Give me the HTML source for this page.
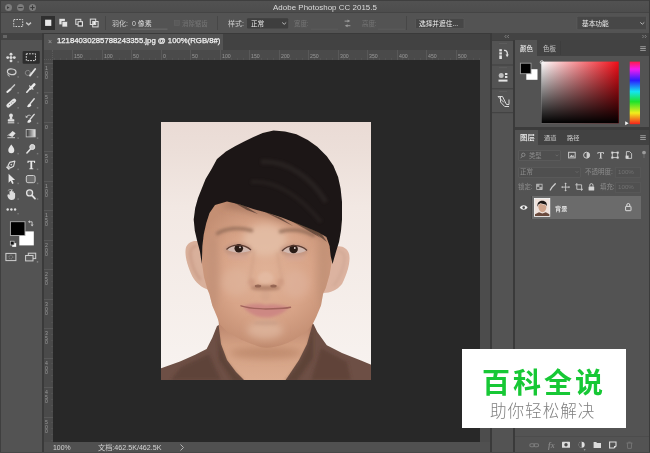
<!DOCTYPE html>
<html lang="zh">
<head>
<meta charset="utf-8">
<title>Adobe Photoshop CC 2015.5</title>
<style>
*{box-sizing:border-box;margin:0;padding:0}
html,body{width:650px;height:453px;overflow:hidden;background:#535353}
body{position:relative;font-family:"Liberation Sans","Noto Sans CJK SC",sans-serif;color:#d6d6d6;font-size:7px;line-height:1}
.a{position:absolute}
.t{position:absolute;white-space:nowrap;line-height:10px;height:10px;will-change:transform}
#titlebar{left:0;top:0;width:650px;height:13px;background:linear-gradient(#525252,#4d4d4d);border-bottom:1px solid #444}
#title{left:0;width:650px;top:3px;text-align:center;font-size:7.9px;color:#dcdcdc;letter-spacing:.05px}
.tl{position:absolute;top:4px;width:7px;height:7px;border-radius:50%;background:#7d7d7d}
#optbar{left:0;top:13px;width:650px;height:20px;background:#535353}
#toolhead{left:0;top:33px;width:42px;height:7px;background:#434343}
#toolbar{left:0;top:40px;width:42px;height:413px;background:#535353}
#toolborder{left:42px;top:33px;width:2px;height:420px;background:#3a3a3a}
#tabbar{left:44px;top:33px;width:446px;height:17px;background:#424242;border-top:1px solid #3a3a3a}
#tab{left:44px;top:34px;width:179px;height:16px;background:#535353}
#hruler{left:44px;top:50px;width:446px;height:10px;background:#4a4a4a}
#vruler{left:44px;top:60px;width:9px;height:382px;background:#4a4a4a}
#canvas{left:53px;top:60px;width:427px;height:382px;background:#282828}
#vscroll{left:480px;top:60px;width:10px;height:382px;background:#4c4c4c}
#status{left:44px;top:442px;width:446px;height:11px;background:#505050}
#stripborder{left:490px;top:33px;width:2px;height:420px;background:#3a3a3a}
#striphead{left:492px;top:33px;width:158px;height:7px;background:#434343}
#strip{left:492px;top:40px;width:21px;height:413px;background:#535353}
#panelborder{left:513px;top:40px;width:2px;height:413px;background:#3a3a3a}
#panel{left:515px;top:40px;width:135px;height:413px;background:#535353}
.ptabs{left:515px;width:135px;height:16px;background:#424242}
.ptab{position:absolute;top:0;height:16px;background:#535353}
.rl{will-change:transform;position:absolute;font-size:5.2px;color:#9a9a9a;line-height:5px;white-space:nowrap}
.tick{position:absolute;background:#585858}
</style>
</head>
<body>
<div id="ui" style="position:absolute;left:0;top:0;width:650px;height:453px;filter:blur(.4px)">
<!-- title bar -->
<div class="a" id="titlebar"></div>
<div class="tl" style="left:5px"></div><div class="tl" style="left:17px"></div><div class="tl" style="left:29px"></div>
<div class="t" id="title">Adobe Photoshop CC 2015.5</div>

<!-- options bar -->
<div class="a" id="optbar"></div>


<!-- options bar content -->
<svg class="a" style="left:0;top:0" width="650" height="453" viewBox="0 0 650 453" id="ico1">
 <!-- traffic light glyphs -->
 <g stroke="#3a3a3a" stroke-width="1" fill="none">
  <path d="M7 6.2l2.6 1.4-2.6 1.4z" fill="#3a3a3a" stroke="none"/>
  <path d="M18.3 7.6h4.4"/>
  <path d="M30.3 7.6h4.4M32.5 5.4v4.4"/>
 </g>
 <!-- marquee tool icon -->
 <rect x="13.7" y="19.5" width="9" height="7" fill="none" stroke="#cfcfcf" stroke-width="1" stroke-dasharray="1.6 1.1"/>
 <path d="M26.200 22.600l2.400 2.100 2.400-2.100" fill="none" stroke="#c6c6c6" stroke-width="1.400"/>
 <!-- selection mode buttons -->
 <rect x="41" y="16" width="14" height="14" fill="#2f2f2f"/>
 <rect x="45.100" y="19.700" width="6.200" height="6.200" fill="#e6e6e6"/>
 <rect x="59.3" y="18.8" width="5.6" height="5.6" fill="#e4e4e4"/>
 <rect x="62" y="21.4" width="5.6" height="5.6" fill="#e4e4e4" stroke="#535353" stroke-width=".7"/>
 <rect x="75.8" y="19.3" width="5" height="5" fill="none" stroke="#dcdcdc" stroke-width="1"/>
 <rect x="77.6" y="21.2" width="5.4" height="5.4" fill="#e4e4e4"/>
 <rect x="78.6" y="22.2" width="3.2" height="3.2" fill="#3a3a3a"/>
 <rect x="90.3" y="19.1" width="5.4" height="5.4" fill="none" stroke="#dcdcdc" stroke-width="1"/>
 <rect x="92.7" y="21.5" width="5.4" height="5.4" fill="none" stroke="#dcdcdc" stroke-width="1"/>
 <rect x="93.2" y="22" width="2" height="2" fill="#f0f0f0"/>
 <!-- separators -->
 <rect x="105" y="16" width="1" height="14" fill="#474747"/>
 <rect x="217" y="16" width="1" height="14" fill="#474747"/>
 <rect x="406" y="16" width="1" height="14" fill="#474747"/>
 <!-- feather underline -->
 <rect x="130.5" y="28.6" width="37" height="1" fill="#6c6c6c"/>
 <!-- checkbox -->
 <rect x="174.3" y="20.6" width="5" height="5" fill="#5a5a5a" stroke="#636363" stroke-width=".6"/>
 <!-- style dropdown -->
 <rect x="247" y="18.3" width="41.2" height="10.2" rx="1" fill="#3e3e3e"/>
 <path d="M282.2 22.5l2 1.8 2-1.8" fill="none" stroke="#b9b9b9" stroke-width="1"/>
 <!-- width/height fields -->
 <rect x="311" y="28.6" width="27" height="1" fill="#5b5b5b"/>
 <rect x="378" y="28.6" width="27" height="1" fill="#5b5b5b"/>
 <g fill="#9c9c9c"><path d="M347.5 19.6l2.8 1.5-2.8 1.5zM347.6 24.2l-2.8 1.5 2.8 1.5z"/><rect x="344.6" y="20.6" width="3.4" height="1"/><rect x="347" y="25.2" width="3.4" height="1"/></g>
 <!-- select and mask button -->
 <rect x="415.5" y="18.3" width="48.5" height="10.4" rx="1" fill="#464646" stroke="#5f5f5f" stroke-width=".6"/>
 <!-- workspace dropdown -->
 <rect x="577" y="16.2" width="69.5" height="13.6" rx="1" fill="#474747" stroke="#5e5e5e" stroke-width=".6"/>
 <path d="M640.3 22.4l2 1.8 2-1.8" fill="none" stroke="#b9b9b9" stroke-width="1"/>
</svg>
<div class="t" style="left:111.5px;top:18.5px;font-size:7px;color:#cfcfcf">羽化:</div>
<div class="t" style="left:131.5px;top:18.5px;font-size:7px;color:#d8d8d8">0 像素</div>
<div class="t" style="left:182px;top:18.5px;font-size:6.4px;color:#767676">消除锯齿</div>
<div class="t" style="left:227.5px;top:18.5px;font-size:7px;color:#cfcfcf">样式:</div>
<div class="t" style="left:250.5px;top:18.5px;font-size:6.6px;color:#ececec">正常</div>
<div class="t" style="left:294px;top:18.5px;font-size:6.4px;color:#767676">宽度:</div>
<div class="t" style="left:362px;top:18.5px;font-size:6.4px;color:#767676">高度:</div>
<div class="t" style="left:419px;top:18.5px;font-size:6.7px;color:#f0f0f0">选择并遮住...</div>
<div class="t" style="left:581.5px;top:18.5px;font-size:6.7px;color:#ececec">基本功能</div>

<!-- toolbar -->
<div class="a" id="toolhead"></div>
<div class="a" id="toolbar"></div>
<div class="a" id="toolborder"></div>


<svg class="a" style="left:0;top:0" width="650" height="453" viewBox="0 0 650 453" id="ico2">
 <g fill="#8a8a8a"><rect x="3.5" y="35" width="1" height="3"/><rect x="5.5" y="35" width="1" height="3"/></g>
 <g><rect x="17.4" y="61.2" width="1.5" height="1.5" fill="#7b7b7b"/><rect x="36.7" y="61.1" width="1.6" height="1.6" fill="#9a9a9a"/><rect x="17.4" y="76.2" width="1.5" height="1.5" fill="#7b7b7b"/><rect x="36.800000000000004" y="76.2" width="1.5" height="1.5" fill="#7b7b7b"/><rect x="17.4" y="92.1" width="1.5" height="1.5" fill="#7b7b7b"/><rect x="36.800000000000004" y="92.1" width="1.5" height="1.5" fill="#7b7b7b"/><rect x="17.4" y="107.1" width="1.5" height="1.5" fill="#7b7b7b"/><rect x="36.800000000000004" y="107.1" width="1.5" height="1.5" fill="#7b7b7b"/><rect x="17.4" y="122.5" width="1.5" height="1.5" fill="#7b7b7b"/><rect x="36.800000000000004" y="122.5" width="1.5" height="1.5" fill="#7b7b7b"/><rect x="17.4" y="137.4" width="1.5" height="1.5" fill="#7b7b7b"/><rect x="36.800000000000004" y="137.4" width="1.5" height="1.5" fill="#7b7b7b"/><rect x="17.4" y="152.9" width="1.5" height="1.5" fill="#7b7b7b"/><rect x="36.800000000000004" y="152.9" width="1.5" height="1.5" fill="#7b7b7b"/><rect x="17.4" y="168.6" width="1.5" height="1.5" fill="#7b7b7b"/><rect x="36.800000000000004" y="168.6" width="1.5" height="1.5" fill="#7b7b7b"/><rect x="17.4" y="182.7" width="1.5" height="1.5" fill="#7b7b7b"/><rect x="36.800000000000004" y="182.7" width="1.5" height="1.5" fill="#7b7b7b"/><rect x="17.4" y="198.3" width="1.5" height="1.5" fill="#7b7b7b"/><rect x="36.800000000000004" y="198.3" width="1.5" height="1.5" fill="#7b7b7b"/><rect x="17.4" y="213" width="1.4" height="1.4" fill="#7b7b7b"/></g>
 <!-- move -->
 <g fill="#d9d9d9">
  <circle cx="11" cy="57.6" r="1.5"/><circle cx="11" cy="54.3" r="1.45"/><circle cx="11" cy="60.9" r="1.45"/><circle cx="7.7" cy="57.6" r="1.45"/><circle cx="14.3" cy="57.6" r="1.45"/>
 </g>
 <!-- marquee (selected) -->
 <rect x="22.6" y="51" width="17.2" height="12.8" rx="1" fill="#2d2d2d"/>
 <rect x="26.3" y="53.8" width="9.2" height="6.8" fill="none" stroke="#d6d6d6" stroke-width="1" stroke-dasharray="1.7 1.1"/>
 <!-- lasso -->
 <g fill="none" stroke="#cfcfcf" stroke-width="1.2">
  <ellipse cx="11.7" cy="71.8" rx="4.3" ry="2.8" transform="rotate(8 11.7 71.8)"/>
  <path d="M8.3 73.6c-.8 1-.2 2.4 1.4 2.6" stroke-width="1"/>
 </g>
 <!-- quick select -->
 <circle cx="27.8" cy="72.9" r="2.5" fill="none" stroke="#b9b9b9" stroke-width=".8" stroke-dasharray="1.2 .8"/>
 <path d="M30 75.6l5.2-6.6" stroke="#e2e2e2" stroke-width="1.9" stroke-linecap="round"/>
 <!-- crop / slice -->
 <path d="M7.3 91.9l3.2-2.7" stroke="#ededed" stroke-width="2" stroke-linecap="round"/>
 <path d="M10.8 88.8l3.7-3.9" stroke="#c4c4c4" stroke-width="1.5" stroke-linecap="round"/>
 <!-- eyedropper -->
 <path d="M26.8 92.2l4-4.4" stroke="#e6e6e6" stroke-width="1.6" stroke-linecap="round"/>
 <path d="M30.4 88.6l3.9-4.2" stroke="#ededed" stroke-width="2.6" stroke-linecap="round"/>
 <path d="M29.6 85.9l3.4 3.3" stroke="#e0e0e0" stroke-width="1.2" stroke-linecap="round"/>
 <!-- healing (bandage) -->
 <path d="M8.4 105.6l5.8-5" stroke="#e2e2e2" stroke-width="4" stroke-linecap="round"/>
 <path d="M9.6 104.5l.01 0M11.3 103.1l.01 0M13 101.6l.01 0" stroke="#6b6b6b" stroke-width="1" stroke-linecap="round"/>
 <!-- brush -->
 <path d="M30.3 103.4l3.9-4.6" stroke="#dcdcdc" stroke-width="1.5" stroke-linecap="round"/>
 <path d="M27.2 107c.3-1.7 1.200-3 2.800-3.400.9.600 1.200 1.200 1.300 2-1.100 1.400-2.500 1.800-4.100 1.400z" fill="#ececec"/>
 <!-- stamp -->
 <g fill="#e0e0e0"><circle cx="11" cy="115.500" r="1.9"/><path d="M10 116.500h2l.5 3h-3z"/><rect x="7.8" y="119.300" width="6.500" height="2.300" rx=".5"/><rect x="7.800" y="122.300" width="6.500" height="1"/></g>
 <!-- history brush -->
 <path d="M30.300 119l3.900-4.600" stroke="#dcdcdc" stroke-width="1.400" stroke-linecap="round"/>
 <path d="M27.200 122.600c.3-1.700 1.200-3 2.800-3.400.9.600 1.200 1.200 1.300 2-1.100 1.400-2.500 1.800-4.100 1.400z" fill="#ececec"/>
 <path d="M26.300 117.200c.8-1.800 2.600-2.400 4.200-1.700" fill="none" stroke="#c9c9c9" stroke-width=".9"/>
 <path d="M25.400 115.400l.6 2.500 2.300-.9z" fill="#c9c9c9"/>
 <!-- eraser -->
 <path d="M8.300 135.300l4.300-4.300 3 2.300-3.200 3.600z" fill="#e2e2e2"/>
 <path d="M7.400 137.700h7.600" stroke="#cfcfcf" stroke-width="1"/>
 <path d="M7.600 135.800l2.200-2.200" stroke="#bdbdbd" stroke-width=".9"/>
 <!-- gradient -->
 <defs><linearGradient id="gr" x1="0" x2="1" y1="0" y2="0"><stop offset="0" stop-color="#2e2e2e"/><stop offset="1" stop-color="#e8e8e8"/></linearGradient></defs>
 <rect x="26.200" y="129.600" width="9" height="7.300" fill="url(#gr)" stroke="#c8c8c8" stroke-width=".8"/>
 <!-- blur drop -->
 <path d="M11.300 144.600c1.600 2.300 3 3.900 3 5.700a3 3 0 0 1-6 0c0-1.800 1.400-3.400 3-5.700z" fill="#e6e6e6"/>
 <!-- dodge -->
 <circle cx="32.300" cy="147" r="2.500" fill="#c9c9c9" stroke="#e6e6e6" stroke-width="1"/>
 <path d="M30.300 149.300l-3.400 3.700" stroke="#e2e2e2" stroke-width="1.600" stroke-linecap="round"/>
 <!-- pen -->
 <g transform="rotate(45 11 165)"><path d="M11 159.500l2.700 4.500-1 3.500h-3.400l-1-3.500z" fill="none" stroke="#dcdcdc" stroke-width="1.100" stroke-linejoin="round"/><rect x="9" y="168.300" width="4" height="1.800" fill="#dcdcdc"/><circle cx="11" cy="164.600" r=".8" fill="#dcdcdc"/></g>
 <!-- T -->
 <path d="M27.500 160.700h7.600v2.300h-.9l-.3-1.200h-1.700v6.400l1.100.3v.8h-4v-.8l1.100-.3v-6.400h-1.700l-.3 1.200h-.9z" fill="#e8e8e8"/>
 <!-- path selection arrow -->
 <path d="M8.600 173.700v9l2.100-2 1.500 3.300 1.500-.7-1.500-3.200h2.900z" fill="#e6e6e6"/>
 <!-- shape -->
 <rect x="26.300" y="175.500" width="8.800" height="7.200" rx="1.600" fill="#6c6c6c" stroke="#cdcdcd" stroke-width="1"/>
 <!-- hand -->
 <path d="M7.600 196.500c-.5-1.600.2-2.600 1.300-2.100l.6.900v-3.600c0-1 1.300-1 1.400 0v-1c.1-1 1.400-1 1.500 0v1.200c.1-1 1.400-.9 1.400.1v1.300c.2-.9 1.300-.8 1.300.2v3.500c0 2-1.300 3-3.500 3-2 0-3.300-1.300-4-3.500z" fill="#dcdcdc"/>
 <path d="M7.800 190.800c1.200-1.300 3.200-1.700 5-1" fill="none" stroke="#b5b5b5" stroke-width=".8"/>
 <!-- zoom -->
 <circle cx="29.600" cy="192.900" r="3" fill="#6a6a6a" stroke="#e2e2e2" stroke-width="1.300"/>
 <path d="M32 195.400l3 3.200" stroke="#e2e2e2" stroke-width="1.800" stroke-linecap="round"/>
 <!-- dots -->
 <g fill="#e0e0e0"><circle cx="7.700" cy="209.500" r="1.200"/><circle cx="11.400" cy="209.500" r="1.200"/><circle cx="15.100" cy="209.500" r="1.200"/></g>
 <!-- colour swatches -->
 <rect x="19.300" y="231.400" width="14.500" height="14" fill="#fff"/>
 <rect x="10.400" y="221.700" width="14.600" height="13.800" fill="#000" stroke="#b0b0b0" stroke-width=".9"/>
 <g fill="none" stroke="#cfcfcf" stroke-width=".9"><path d="M29.500 221.800h2.600v2.800"/></g>
 <path d="M28 221.800l1.800-1.500v3zM32.100 226.400l-1.500-1.800h3z" fill="#cfcfcf"/>
 <rect x="12.400" y="243.200" width="3.600" height="3.600" fill="#fff" stroke="#ddd" stroke-width=".4"/>
 <rect x="10.300" y="241.200" width="3.800" height="3.800" fill="#111" stroke="#cfcfcf" stroke-width=".7"/>
 <!-- quick mask & screen mode -->
 <rect x="5.900" y="253.400" width="10" height="7.200" fill="none" stroke="#cfcfcf" stroke-width="1"/>
 <circle cx="10.900" cy="257" r="1.900" fill="none" stroke="#9d9d9d" stroke-width=".8" stroke-dasharray="1 .7"/>
 <rect x="28.300" y="253.200" width="7.400" height="5.400" fill="#5c5c5c" stroke="#cfcfcf" stroke-width="1"/>
 <rect x="25.600" y="255.500" width="7.400" height="5.400" fill="#5c5c5c" stroke="#cfcfcf" stroke-width="1"/>
 <rect x="36.800" y="261.200" width="1.400" height="1.400" fill="#8a8a8a"/>
</svg>

<!-- document -->
<div class="a" id="tabbar"></div>
<div class="a" id="tab"></div>
<div class="t" style="left:48px;top:37px;font-size:7px;color:#a0a0a0">×</div>
<div class="t" style="left:57.3px;top:36.2px;font-size:7.75px;color:#f2f2f2;-webkit-text-stroke:.25px #f2f2f2">12184030285788243355.jpg @ 100%(RGB/8#)</div>
<div class="a" id="hruler"></div>
<div class="a" id="vruler"></div>
<div class="tick" style="left:72.0px;top:50px;width:1px;height:10px"></div><div class="rl" style="left:74.0px;top:54px">150</div><div class="tick" style="left:101.5px;top:50px;width:1px;height:10px"></div><div class="rl" style="left:103.5px;top:54px">100</div><div class="tick" style="left:131.0px;top:50px;width:1px;height:10px"></div><div class="rl" style="left:133.0px;top:54px">50</div><div class="tick" style="left:160.5px;top:50px;width:1px;height:10px"></div><div class="rl" style="left:162.5px;top:54px">0</div><div class="tick" style="left:190.0px;top:50px;width:1px;height:10px"></div><div class="rl" style="left:192.0px;top:54px">50</div><div class="tick" style="left:219.5px;top:50px;width:1px;height:10px"></div><div class="rl" style="left:221.5px;top:54px">100</div><div class="tick" style="left:249.0px;top:50px;width:1px;height:10px"></div><div class="rl" style="left:251.0px;top:54px">150</div><div class="tick" style="left:278.5px;top:50px;width:1px;height:10px"></div><div class="rl" style="left:280.5px;top:54px">200</div><div class="tick" style="left:308.0px;top:50px;width:1px;height:10px"></div><div class="rl" style="left:310.0px;top:54px">250</div><div class="tick" style="left:337.5px;top:50px;width:1px;height:10px"></div><div class="rl" style="left:339.5px;top:54px">300</div><div class="tick" style="left:367.0px;top:50px;width:1px;height:10px"></div><div class="rl" style="left:369.0px;top:54px">350</div><div class="tick" style="left:396.5px;top:50px;width:1px;height:10px"></div><div class="rl" style="left:398.5px;top:54px">400</div><div class="tick" style="left:426.0px;top:50px;width:1px;height:10px"></div><div class="rl" style="left:428.0px;top:54px">450</div><div class="tick" style="left:455.5px;top:50px;width:1px;height:10px"></div><div class="rl" style="left:457.5px;top:54px">500</div><div class="tick" style="left:54.3px;top:57.5px;width:1px;height:2.5px;background:#525252"></div><div class="tick" style="left:60.2px;top:57.5px;width:1px;height:2.5px;background:#525252"></div><div class="tick" style="left:66.1px;top:57.5px;width:1px;height:2.5px;background:#525252"></div><div class="tick" style="left:77.9px;top:57.5px;width:1px;height:2.5px;background:#525252"></div><div class="tick" style="left:83.8px;top:57.5px;width:1px;height:2.5px;background:#525252"></div><div class="tick" style="left:89.7px;top:57.5px;width:1px;height:2.5px;background:#525252"></div><div class="tick" style="left:95.6px;top:57.5px;width:1px;height:2.5px;background:#525252"></div><div class="tick" style="left:107.4px;top:57.5px;width:1px;height:2.5px;background:#525252"></div><div class="tick" style="left:113.3px;top:57.5px;width:1px;height:2.5px;background:#525252"></div><div class="tick" style="left:119.2px;top:57.5px;width:1px;height:2.5px;background:#525252"></div><div class="tick" style="left:125.1px;top:57.5px;width:1px;height:2.5px;background:#525252"></div><div class="tick" style="left:136.9px;top:57.5px;width:1px;height:2.5px;background:#525252"></div><div class="tick" style="left:142.8px;top:57.5px;width:1px;height:2.5px;background:#525252"></div><div class="tick" style="left:148.7px;top:57.5px;width:1px;height:2.5px;background:#525252"></div><div class="tick" style="left:154.6px;top:57.5px;width:1px;height:2.5px;background:#525252"></div><div class="tick" style="left:166.4px;top:57.5px;width:1px;height:2.5px;background:#525252"></div><div class="tick" style="left:172.3px;top:57.5px;width:1px;height:2.5px;background:#525252"></div><div class="tick" style="left:178.2px;top:57.5px;width:1px;height:2.5px;background:#525252"></div><div class="tick" style="left:184.1px;top:57.5px;width:1px;height:2.5px;background:#525252"></div><div class="tick" style="left:195.9px;top:57.5px;width:1px;height:2.5px;background:#525252"></div><div class="tick" style="left:201.8px;top:57.5px;width:1px;height:2.5px;background:#525252"></div><div class="tick" style="left:207.7px;top:57.5px;width:1px;height:2.5px;background:#525252"></div><div class="tick" style="left:213.6px;top:57.5px;width:1px;height:2.5px;background:#525252"></div><div class="tick" style="left:225.4px;top:57.5px;width:1px;height:2.5px;background:#525252"></div><div class="tick" style="left:231.3px;top:57.5px;width:1px;height:2.5px;background:#525252"></div><div class="tick" style="left:237.2px;top:57.5px;width:1px;height:2.5px;background:#525252"></div><div class="tick" style="left:243.1px;top:57.5px;width:1px;height:2.5px;background:#525252"></div><div class="tick" style="left:254.9px;top:57.5px;width:1px;height:2.5px;background:#525252"></div><div class="tick" style="left:260.8px;top:57.5px;width:1px;height:2.5px;background:#525252"></div><div class="tick" style="left:266.7px;top:57.5px;width:1px;height:2.5px;background:#525252"></div><div class="tick" style="left:272.6px;top:57.5px;width:1px;height:2.5px;background:#525252"></div><div class="tick" style="left:284.4px;top:57.5px;width:1px;height:2.5px;background:#525252"></div><div class="tick" style="left:290.3px;top:57.5px;width:1px;height:2.5px;background:#525252"></div><div class="tick" style="left:296.2px;top:57.5px;width:1px;height:2.5px;background:#525252"></div><div class="tick" style="left:302.1px;top:57.5px;width:1px;height:2.5px;background:#525252"></div><div class="tick" style="left:313.9px;top:57.5px;width:1px;height:2.5px;background:#525252"></div><div class="tick" style="left:319.8px;top:57.5px;width:1px;height:2.5px;background:#525252"></div><div class="tick" style="left:325.7px;top:57.5px;width:1px;height:2.5px;background:#525252"></div><div class="tick" style="left:331.6px;top:57.5px;width:1px;height:2.5px;background:#525252"></div><div class="tick" style="left:343.4px;top:57.5px;width:1px;height:2.5px;background:#525252"></div><div class="tick" style="left:349.3px;top:57.5px;width:1px;height:2.5px;background:#525252"></div><div class="tick" style="left:355.2px;top:57.5px;width:1px;height:2.5px;background:#525252"></div><div class="tick" style="left:361.1px;top:57.5px;width:1px;height:2.5px;background:#525252"></div><div class="tick" style="left:372.9px;top:57.5px;width:1px;height:2.5px;background:#525252"></div><div class="tick" style="left:378.8px;top:57.5px;width:1px;height:2.5px;background:#525252"></div><div class="tick" style="left:384.7px;top:57.5px;width:1px;height:2.5px;background:#525252"></div><div class="tick" style="left:390.6px;top:57.5px;width:1px;height:2.5px;background:#525252"></div><div class="tick" style="left:402.4px;top:57.5px;width:1px;height:2.5px;background:#525252"></div><div class="tick" style="left:408.3px;top:57.5px;width:1px;height:2.5px;background:#525252"></div><div class="tick" style="left:414.2px;top:57.5px;width:1px;height:2.5px;background:#525252"></div><div class="tick" style="left:420.1px;top:57.5px;width:1px;height:2.5px;background:#525252"></div><div class="tick" style="left:431.9px;top:57.5px;width:1px;height:2.5px;background:#525252"></div><div class="tick" style="left:437.8px;top:57.5px;width:1px;height:2.5px;background:#525252"></div><div class="tick" style="left:443.7px;top:57.5px;width:1px;height:2.5px;background:#525252"></div><div class="tick" style="left:449.6px;top:57.5px;width:1px;height:2.5px;background:#525252"></div><div class="tick" style="left:461.4px;top:57.5px;width:1px;height:2.5px;background:#525252"></div><div class="tick" style="left:467.3px;top:57.5px;width:1px;height:2.5px;background:#525252"></div><div class="tick" style="left:473.2px;top:57.5px;width:1px;height:2.5px;background:#525252"></div><div class="tick" style="left:479.1px;top:57.5px;width:1px;height:2.5px;background:#525252"></div><div class="tick" style="left:44px;top:62.5px;width:9px;height:1px"></div><div class="rl" style="left:45.3px;top:65.5px;line-height:4.6px">1<br>0<br>0</div><div class="tick" style="left:44px;top:92.0px;width:9px;height:1px"></div><div class="rl" style="left:45.3px;top:95.0px;line-height:4.6px">5<br>0</div><div class="tick" style="left:44px;top:121.5px;width:9px;height:1px"></div><div class="rl" style="left:45.3px;top:124.5px;line-height:4.6px">0</div><div class="tick" style="left:44px;top:151.0px;width:9px;height:1px"></div><div class="rl" style="left:45.3px;top:154.0px;line-height:4.6px">5<br>0</div><div class="tick" style="left:44px;top:180.5px;width:9px;height:1px"></div><div class="rl" style="left:45.3px;top:183.5px;line-height:4.6px">1<br>0<br>0</div><div class="tick" style="left:44px;top:210.0px;width:9px;height:1px"></div><div class="rl" style="left:45.3px;top:213.0px;line-height:4.6px">1<br>5<br>0</div><div class="tick" style="left:44px;top:239.5px;width:9px;height:1px"></div><div class="rl" style="left:45.3px;top:242.5px;line-height:4.6px">2<br>0<br>0</div><div class="tick" style="left:44px;top:269.0px;width:9px;height:1px"></div><div class="rl" style="left:45.3px;top:272.0px;line-height:4.6px">2<br>5<br>0</div><div class="tick" style="left:44px;top:298.5px;width:9px;height:1px"></div><div class="rl" style="left:45.3px;top:301.5px;line-height:4.6px">3<br>0<br>0</div><div class="tick" style="left:44px;top:328.0px;width:9px;height:1px"></div><div class="rl" style="left:45.3px;top:331.0px;line-height:4.6px">3<br>5<br>0</div><div class="tick" style="left:44px;top:357.5px;width:9px;height:1px"></div><div class="rl" style="left:45.3px;top:360.5px;line-height:4.6px">4<br>0<br>0</div><div class="tick" style="left:44px;top:387.0px;width:9px;height:1px"></div><div class="rl" style="left:45.3px;top:390.0px;line-height:4.6px">4<br>5<br>0</div><div class="tick" style="left:44px;top:416.5px;width:9px;height:1px"></div><div class="rl" style="left:45.3px;top:419.5px;line-height:4.6px">5<br>0<br>0</div><div class="tick" style="left:50.5px;top:68.4px;width:2.5px;height:1px;background:#525252"></div><div class="tick" style="left:50.5px;top:74.3px;width:2.5px;height:1px;background:#525252"></div><div class="tick" style="left:50.5px;top:80.2px;width:2.5px;height:1px;background:#525252"></div><div class="tick" style="left:50.5px;top:86.1px;width:2.5px;height:1px;background:#525252"></div><div class="tick" style="left:50.5px;top:97.9px;width:2.5px;height:1px;background:#525252"></div><div class="tick" style="left:50.5px;top:103.8px;width:2.5px;height:1px;background:#525252"></div><div class="tick" style="left:50.5px;top:109.7px;width:2.5px;height:1px;background:#525252"></div><div class="tick" style="left:50.5px;top:115.6px;width:2.5px;height:1px;background:#525252"></div><div class="tick" style="left:50.5px;top:127.4px;width:2.5px;height:1px;background:#525252"></div><div class="tick" style="left:50.5px;top:133.3px;width:2.5px;height:1px;background:#525252"></div><div class="tick" style="left:50.5px;top:139.2px;width:2.5px;height:1px;background:#525252"></div><div class="tick" style="left:50.5px;top:145.1px;width:2.5px;height:1px;background:#525252"></div><div class="tick" style="left:50.5px;top:156.9px;width:2.5px;height:1px;background:#525252"></div><div class="tick" style="left:50.5px;top:162.8px;width:2.5px;height:1px;background:#525252"></div><div class="tick" style="left:50.5px;top:168.7px;width:2.5px;height:1px;background:#525252"></div><div class="tick" style="left:50.5px;top:174.6px;width:2.5px;height:1px;background:#525252"></div><div class="tick" style="left:50.5px;top:186.4px;width:2.5px;height:1px;background:#525252"></div><div class="tick" style="left:50.5px;top:192.3px;width:2.5px;height:1px;background:#525252"></div><div class="tick" style="left:50.5px;top:198.2px;width:2.5px;height:1px;background:#525252"></div><div class="tick" style="left:50.5px;top:204.1px;width:2.5px;height:1px;background:#525252"></div><div class="tick" style="left:50.5px;top:215.9px;width:2.5px;height:1px;background:#525252"></div><div class="tick" style="left:50.5px;top:221.8px;width:2.5px;height:1px;background:#525252"></div><div class="tick" style="left:50.5px;top:227.7px;width:2.5px;height:1px;background:#525252"></div><div class="tick" style="left:50.5px;top:233.6px;width:2.5px;height:1px;background:#525252"></div><div class="tick" style="left:50.5px;top:245.4px;width:2.5px;height:1px;background:#525252"></div><div class="tick" style="left:50.5px;top:251.3px;width:2.5px;height:1px;background:#525252"></div><div class="tick" style="left:50.5px;top:257.2px;width:2.5px;height:1px;background:#525252"></div><div class="tick" style="left:50.5px;top:263.1px;width:2.5px;height:1px;background:#525252"></div><div class="tick" style="left:50.5px;top:274.9px;width:2.5px;height:1px;background:#525252"></div><div class="tick" style="left:50.5px;top:280.8px;width:2.5px;height:1px;background:#525252"></div><div class="tick" style="left:50.5px;top:286.7px;width:2.5px;height:1px;background:#525252"></div><div class="tick" style="left:50.5px;top:292.6px;width:2.5px;height:1px;background:#525252"></div><div class="tick" style="left:50.5px;top:304.4px;width:2.5px;height:1px;background:#525252"></div><div class="tick" style="left:50.5px;top:310.3px;width:2.5px;height:1px;background:#525252"></div><div class="tick" style="left:50.5px;top:316.2px;width:2.5px;height:1px;background:#525252"></div><div class="tick" style="left:50.5px;top:322.1px;width:2.5px;height:1px;background:#525252"></div><div class="tick" style="left:50.5px;top:333.9px;width:2.5px;height:1px;background:#525252"></div><div class="tick" style="left:50.5px;top:339.8px;width:2.5px;height:1px;background:#525252"></div><div class="tick" style="left:50.5px;top:345.7px;width:2.5px;height:1px;background:#525252"></div><div class="tick" style="left:50.5px;top:351.6px;width:2.5px;height:1px;background:#525252"></div><div class="tick" style="left:50.5px;top:363.4px;width:2.5px;height:1px;background:#525252"></div><div class="tick" style="left:50.5px;top:369.3px;width:2.5px;height:1px;background:#525252"></div><div class="tick" style="left:50.5px;top:375.2px;width:2.5px;height:1px;background:#525252"></div><div class="tick" style="left:50.5px;top:381.1px;width:2.5px;height:1px;background:#525252"></div><div class="tick" style="left:50.5px;top:392.9px;width:2.5px;height:1px;background:#525252"></div><div class="tick" style="left:50.5px;top:398.8px;width:2.5px;height:1px;background:#525252"></div><div class="tick" style="left:50.5px;top:404.7px;width:2.5px;height:1px;background:#525252"></div><div class="tick" style="left:50.5px;top:410.6px;width:2.5px;height:1px;background:#525252"></div><div class="tick" style="left:50.5px;top:422.4px;width:2.5px;height:1px;background:#525252"></div><div class="tick" style="left:50.5px;top:428.3px;width:2.5px;height:1px;background:#525252"></div><div class="tick" style="left:50.5px;top:434.2px;width:2.5px;height:1px;background:#525252"></div><div class="tick" style="left:50.5px;top:440.1px;width:2.5px;height:1px;background:#525252"></div><div class="a" style="left:44px;top:50px;width:9px;height:10px;background:#4a4a4a;border-right:1px dotted #5a5a5a;border-bottom:1px dotted #5a5a5a"></div>
<div class="a" id="canvas"></div>
<div class="a" id="vscroll"></div>
<div class="a" id="status"></div>
<div class="t" style="left:52.8px;top:442.8px;font-size:6.9px;color:#d4d4d4">100%</div>
<div class="t" style="left:97.8px;top:442.8px;font-size:7.15px;color:#d4d4d4">文档:462.5K/462.5K</div>
<svg class="a" style="left:179px;top:443px" width="6" height="9" viewBox="0 0 6 9"><path d="M1.500 1.500l3 3-3 3" fill="none" stroke="#b4b4b4" stroke-width="1"/></svg>

<!-- right side -->
<div class="a" id="stripborder"></div>
<div class="a" id="striphead"></div>
<div class="a" id="strip"></div>
<div class="a" id="panelborder"></div>
<div class="a" id="panel"></div>


<!-- right panel content -->
<div class="a ptabs" style="top:40px"></div>
<div class="a" style="left:515px;top:40px;width:22px;height:16px;background:#535353"></div>
<div class="a" style="left:560px;top:41px;width:1px;height:14px;background:#3d3d3d"></div>
<div class="t" style="left:519.8px;top:43.6px;font-size:6.5px;color:#f0f0f0;font-weight:500">颜色</div>
<div class="t" style="left:542.6px;top:43.6px;font-size:6.5px;color:#c4c4c4">色板</div>
<div class="a" style="left:515px;top:127px;width:135px;height:3px;background:#3c3c3c"></div>
<div class="a ptabs" style="top:130px;height:15px"></div>
<div class="a" style="left:515px;top:130px;width:22.500px;height:15px;background:#535353"></div>
<div class="t" style="left:520px;top:132.6px;font-size:7.4px;color:#f2f2f2;font-weight:500">图层</div>
<div class="t" style="left:543.5px;top:132.6px;font-size:6.2px;color:#cdcdcd">通道</div>
<div class="t" style="left:566.5px;top:132.6px;font-size:6.2px;color:#cdcdcd">路径</div>
<!-- filter row -->
<div class="a" style="left:517.500px;top:150px;width:43.500px;height:11px;background:#4f4f4f;border:1px solid #5a5a5a;border-radius:1px"></div>
<div class="t" style="left:528.5px;top:150.5px;font-size:6.3px;color:#8c8c8c">类型</div>
<!-- blend row -->
<div class="a" style="left:517.500px;top:166.500px;width:63px;height:11px;background:#4f4f4f;border:1px solid #595959;border-radius:1px"></div>
<div class="t" style="left:520.3px;top:167px;font-size:6.4px;color:#8d8d8d">正常</div>
<div class="t" style="left:584.6px;top:167px;font-size:6.5px;color:#8d8d8d">不透明度:</div>
<div class="a" style="left:614.500px;top:166.500px;width:26px;height:11px;background:#505050;border:1px solid #575757"></div>
<div class="t" style="left:617.5px;top:167px;font-size:6.2px;color:#727272">100%</div>
<!-- lock row -->
<div class="t" style="left:517.5px;top:182.3px;font-size:6.4px;color:#8d8d8d">锁定:</div>
<div class="t" style="left:600.3px;top:182.3px;font-size:6.4px;color:#8d8d8d">填充:</div>
<div class="a" style="left:614.500px;top:181.800px;width:26px;height:11px;background:#505050;border:1px solid #575757"></div>
<div class="t" style="left:617.5px;top:182.3px;font-size:6.2px;color:#727272">100%</div>
<!-- layer row -->
<div class="a" style="left:515px;top:196px;width:126px;height:22.500px;background:#6b6b6b"></div>
<div class="a" style="left:515px;top:196px;width:17px;height:22.500px;background:#535353;border-right:1px solid #474747"></div>
<div class="t" style="left:555px;top:203.5px;font-size:6.2px;color:#f4f4f4;font-weight:500">背景</div>
<!-- bottom bar -->
<div class="a" style="left:515px;top:436px;width:135px;height:1px;background:#4c4c4c"></div>
<svg class="a" style="left:0;top:0" width="650" height="453" viewBox="0 0 650 453" id="ico3">
 <defs>
  <linearGradient id="sat" x1="0" x2="1" y1="0" y2="0"><stop offset="0" stop-color="#fff"/><stop offset="1" stop-color="#f20d17"/></linearGradient>
  <linearGradient id="val" x1="0" x2="0" y1="0" y2="1"><stop offset="0" stop-color="#000" stop-opacity="0"/><stop offset="1" stop-color="#000"/></linearGradient>
  <linearGradient id="hue" x1="0" x2="0" y1="0" y2="1">
   <stop offset="0" stop-color="#ff1a4a"/><stop offset=".12" stop-color="#f51df0"/><stop offset=".3" stop-color="#2a1cff"/><stop offset=".48" stop-color="#14e6f0"/><stop offset=".64" stop-color="#1de32a"/><stop offset=".82" stop-color="#f2ee1c"/><stop offset="1" stop-color="#f5201c"/>
  </linearGradient>
 </defs>
 <!-- strip header & panel header arrows -->
 <g fill="none" stroke="#8f8f8f" stroke-width=".8"><path d="M506.300 35l-1.400 1.500 1.400 1.500M508.800 35l-1.400 1.500 1.400 1.500"/><path d="M642.400 35l1.400 1.500-1.400 1.500M644.900 35l1.400 1.500-1.400 1.500"/></g>
 <!-- strip cells -->
 <g fill="#404040"><rect x="492" y="40" width="21" height="1"/><rect x="492" y="64.500" width="21" height="1"/><rect x="492" y="88.300" width="21" height="1"/><rect x="492" y="112.200" width="21" height="1"/></g>
 <g fill="#606060"><rect x="499" y="43" width="8" height=".8"/><rect x="499" y="67.300" width="8" height=".8"/><rect x="499" y="91.200" width="8" height=".8"/></g>
 <!-- history icon -->
 <g fill="#e4e4e4"><rect x="499.300" y="49.200" width="2.600" height="2.200"/><rect x="499.300" y="52.300" width="2.600" height="2.200"/><rect x="499.300" y="55.400" width="2.600" height="3.600"/></g>
 <path d="M504 50.500c2.600-.4 3.800 1.800 3.200 4.500" fill="none" stroke="#e0e0e0" stroke-width="1.300"/><path d="M505.600 54.600l3.200-.2-1.700 2.800z" fill="#e0e0e0"/>
 <!-- properties icon -->
 <circle cx="501.200" cy="75.400" r="2.500" fill="#bdbdbd"/><rect x="505" y="73" width="2.400" height="2" fill="#e2e2e2"/><rect x="505" y="76" width="2.400" height="2" fill="#e2e2e2"/><rect x="498.500" y="79.600" width="9" height="2" fill="#e4e4e4"/>
 <!-- adjustments-ish icon -->
 <g fill="none" stroke="#d8d8d8" stroke-width="1"><path d="M498 96.500h4.500l4 8h2.500v-5"/><path d="M500.500 96.500v5.500l4.200 4.500h4.300"/><path d="M498 96.500l6 6"/></g>
 <!-- panel menu icons -->
 <g fill="#a5a5a5"><rect x="640.200" y="46.300" width="5.600" height=".9"/><rect x="640.200" y="48.100" width="5.600" height=".9"/><rect x="640.200" y="49.900" width="5.600" height=".9"/>
 <rect x="640.200" y="135.300" width="5.600" height=".9"/><rect x="640.200" y="137.100" width="5.600" height=".9"/><rect x="640.200" y="138.900" width="5.600" height=".9"/></g>
 <!-- colour panel -->
 <rect x="526.300" y="69.200" width="11.200" height="10.600" fill="#fff"/>
 <rect x="520.400" y="63.200" width="10.600" height="10.500" fill="#000" stroke="#9c9c9c" stroke-width=".9"/>
 <rect x="541.300" y="61.600" width="77.400" height="61.600" fill="url(#sat)"/>
 <rect x="541.300" y="61.600" width="77.400" height="61.600" fill="url(#val)"/>
 <circle cx="541.800" cy="62.200" r="1.600" fill="none" stroke="#eee" stroke-width=".7"/>
 <rect x="629.700" y="61.600" width="10.300" height="62.600" fill="url(#hue)"/>
 <path d="M625.200 121.200l3.400 2-3.400 2z" fill="#f2f2f2"/>
 <!-- filter row icons -->
 <circle cx="523.300" cy="154.800" r="1.700" fill="none" stroke="#8f8f8f" stroke-width=".9"/><path d="M522.200 156.200l-1.500 2" stroke="#8f8f8f" stroke-width=".9"/>
 <path d="M555.600 154.700l1.400 1.400 1.400-1.400" fill="none" stroke="#6d6d6d" stroke-width=".8"/>
 <rect x="568.600" y="152.300" width="6.600" height="5.600" fill="none" stroke="#c9c9c9" stroke-width="1"/><path d="M569.600 157l1.800-2.300 1.300 1.400.8-.8 1 1.500z" fill="#c9c9c9"/>
 <circle cx="586.600" cy="155.200" r="3" fill="none" stroke="#cdcdcd" stroke-width="1"/><path d="M586.600 152.200a3 3 0 0 1 0 6z" fill="#cdcdcd"/>
 <path d="M597.500 152.200h6.400v1.700h-.7l-.2-.8h-1.600v4.600l.8.200v.6h-3v-.6l.8-.2v-4.600h-1.600l-.2.800h-.7z" fill="#d2d2d2"/>
 <g fill="none" stroke="#cdcdcd" stroke-width=".9"><rect x="612.300" y="152.600" width="5.400" height="5"/></g><g fill="#d8d8d8"><rect x="611.300" y="151.600" width="2" height="2"/><rect x="616.700" y="151.600" width="2" height="2"/><rect x="611.300" y="156.600" width="2" height="2"/><rect x="616.700" y="156.600" width="2" height="2"/></g>
 <path d="M626.400 151.600h3.200l2 2v4.800h-5.200z" fill="none" stroke="#cdcdcd" stroke-width=".9"/><rect x="625.600" y="155.600" width="3" height="3" fill="#d8d8d8"/>
 <circle cx="644" cy="152.600" r="1.900" fill="#9b9b9b"/><rect x="643.500" y="154.500" width="1" height="3.500" fill="#6e6e6e"/>
 <path d="M575.600 171.200l1.400 1.400 1.400-1.400" fill="none" stroke="#6d6d6d" stroke-width=".8"/>
 <!-- lock row icons -->
 <g fill="#a8a8a8"><rect x="536.700" y="184.200" width="2.700" height="2.700"/><rect x="539.400" y="186.900" width="2.700" height="2.700"/></g><rect x="536.700" y="184.200" width="5.400" height="5.400" fill="none" stroke="#c4c4c4" stroke-width=".8"/>
 <path d="M550.300 190l1.600-2.600 3.400-3.600" fill="none" stroke="#cfcfcf" stroke-width="1.300" stroke-linecap="round"/>
 <g stroke="#c9c9c9" stroke-width=".9" fill="#c9c9c9"><path d="M565.600 183.400v7.400M561.900 187.100h7.400" fill="none"/><path d="M565.600 182.600l1.200 1.500h-2.400zM565.600 191.600l1.200-1.500h-2.400zM561.100 187.100l1.500-1.200v2.400zM570.100 187.100l-1.500-1.200v2.400z" stroke="none"/></g>
 <g fill="none" stroke="#c9c9c9" stroke-width=".9"><path d="M576.800 183v6.300h6.200M575.300 184.800h6.300v6"/></g>
 <rect x="588.600" y="186.600" width="5.600" height="4" rx=".5" fill="#d4d4d4"/><path d="M589.800 186.600v-1.400a1.600 1.600 0 0 1 3.200 0v1.400" fill="none" stroke="#d4d4d4" stroke-width=".9"/>
 <!-- layer row -->
 <path d="M519.800 207.600c2-3 5.800-3 7.800 0-2 3-5.800 3-7.800 0z" fill="#f0f0f0"/><circle cx="523.700" cy="207.600" r="1.300" fill="#444"/>
 <rect x="534.600" y="198.500" width="15.200" height="17.800" fill="#efe2dc" stroke="#fff" stroke-width=".8"/>
 <path d="M537.500 206.800c-.6-3.400 1.300-6 4.800-6 3.300 0 5 2.400 4.600 5.600l-.8-1.600-5.600-1.600-2.200 1.200z" fill="#1c1614"/>
 <path d="M538.300 205.600l1.900-1.800 5.300 1.500.9 1.700c0 2.500-1.500 5.200-4 5.200s-4.100-2.700-4.100-6.600z" fill="#cfa48c"/>
 <path d="M535 216v-1.800l4-2 3.400 1.300 3.400-1.300 3.600 2v1.800z" fill="#6a4a3d"/>
 <rect x="625.600" y="206.400" width="5.400" height="4.300" rx=".4" fill="none" stroke="#e6e6e6" stroke-width=".9"/><path d="M626.800 206.300v-1.300a1.500 1.500 0 0 1 3 0v1.300" fill="none" stroke="#e6e6e6" stroke-width=".9"/>
 <!-- bottom icons -->
 <g fill="none" stroke="#7c7c7c" stroke-width="1.100"><rect x="529.800" y="443.700" width="4.800" height="3" rx="1.500"/><rect x="533.800" y="443.700" width="4.800" height="3" rx="1.500"/></g>
 <rect x="562" y="441.800" width="8" height="6" rx=".6" fill="#dcdcdc"/><circle cx="566" cy="444.800" r="1.700" fill="#4a4a4a"/>
 <circle cx="581.700" cy="444.800" r="3" fill="#e0e0e0"/><path d="M581.700 441.800a3 3 0 0 0 0 6z" fill="#555"/><path d="M583.600 449.500l1 1 1-1z" fill="#ccc"/>
 <path d="M593.600 442h2.600l.8 1h4v5h-7.400z" fill="#dcdcdc"/>
 <path d="M609.600 442h6.400v4l-2 2h-4.400z" fill="none" stroke="#dcdcdc" stroke-width="1.100"/><path d="M616 446h-2v2z" fill="#dcdcdc"/>
 <g fill="none" stroke="#777" stroke-width=".9"><path d="M626.600 443h5.800M627.300 443l.4 5.400h3.600l.4-5.400M628.300 442.200h2.400"/></g>
</svg>
<div class="t" style="left:547.6px;top:440.5px;font-size:8px;font-weight:700;color:#868686;font-family:'Liberation Serif',serif;font-style:italic">fx</div>

<!-- PHOTO -->
<svg class="a" id="photo" style="left:161px;top:122px" width="210" height="258" viewBox="0 0 210 258">
 <defs>
  <linearGradient id="pbg" x1="0" x2="0" y1="0" y2="1"><stop offset="0" stop-color="#eadbd5"/><stop offset=".12" stop-color="#ecdfd9"/><stop offset=".33" stop-color="#f2e8e3"/><stop offset="1" stop-color="#f8f3f0"/></linearGradient>
  <radialGradient id="pskin" cx="105" cy="150" r="75" gradientUnits="userSpaceOnUse"><stop offset="0" stop-color="#e0b297"/><stop offset=".6" stop-color="#d8a488"/><stop offset="1" stop-color="#c48f73"/></radialGradient>
  <linearGradient id="pneck" x1="0" x2="0" y1="200" y2="258" gradientUnits="userSpaceOnUse"><stop offset="0" stop-color="#b9836a"/><stop offset=".4" stop-color="#d3a083"/><stop offset="1" stop-color="#dbab8f"/></linearGradient>
  <filter id="b1" x="-5%" y="-5%" width="110%" height="110%"><feGaussianBlur stdDeviation=".7"/></filter>
  <filter id="b2" x="-20%" y="-20%" width="140%" height="140%"><feGaussianBlur stdDeviation="1.6"/></filter>
  <filter id="b3" x="-30%" y="-30%" width="160%" height="160%"><feGaussianBlur stdDeviation="3.5"/></filter>
  <clipPath id="pclip"><rect width="210" height="258"/></clipPath>
  <clipPath id="fclip"><path d="M47 80L41.500 112 41 141 43 155 46.500 167.600 48.400 172 51.300 183.400 56 194.800 57.500 200 58 206 60 222 66 238 75 250 84 259H124L130 250 138 238 146 222 151 204 155.300 194.800 160 183.400 162 172 164.800 165.700 168.600 152.500 170.500 141 170 120 168 100 150 70H60z"/></clipPath>
 </defs>
 <g clip-path="url(#pclip)">
 <rect width="210" height="258" fill="url(#pbg)"/>
 <g filter="url(#b1)">
  <!-- shirt -->
  <path d="M-2 247L19 239.400 34.200 232.800 45.600 227 51.300 215.700 56 204 60 202 150 201 152.500 202 156.300 210 165.800 223.300 181 230.900 200 238.500 212 243.500V260H-2z" fill="#6d5044"/>
  <!-- neck -->
  <path d="M57.500 196L58 206 60 222 66 238 75 250 84 259H124L130 250 138 238 146 222 151 204 152 196z" fill="url(#pneck)"/>
  <!-- ears -->
  <path d="M38 119.500C33 118 26.500 120 24.800 126 23.500 133 26 143 31.300 154.300 35 161 41 166 47 167.500L47 125z" fill="#d9b09b"/>
  <path d="M174 125C180 123 186.500 125.500 188.300 133 189.300 140 187 150 181 162 176.500 168 169 171 162.500 171L165 128z" fill="#dcb3a0"/>
  <!-- face -->
  <path d="M47 80L41.500 112 41 141 43 155 46.500 167.600 48.400 172 51.300 183.400 56 194.800 58.900 202.400 66.500 210 79.700 217.600 88 221 95 223.600 100 225.200 105 225.800 110 225.500 115 224.600 120.200 223.300 127 220.800 133.500 217.600 144.900 210 151.500 202.400 155.300 194.800 160 183.400 162 172 164.800 165.700 168.600 152.500 170.500 141 170 120 168 100 150 70H60z" fill="url(#pskin)"/>
 </g>
 <!-- soft shading -->
 <g clip-path="url(#fclip)"><g filter="url(#b3)">
  <ellipse cx="52" cy="150" rx="7" ry="38" fill="#b98b72" opacity=".55"/>
  <ellipse cx="162" cy="150" rx="6" ry="36" fill="#b98b72" opacity=".5"/>
  <ellipse cx="105" cy="231" rx="36" ry="6" fill="#ad7759" opacity=".5"/>
  <ellipse cx="104" cy="118" rx="22" ry="16" fill="#e6c3ad" opacity=".7"/>
  <ellipse cx="104" cy="208" rx="18" ry="9" fill="#e3bea7" opacity=".6"/>
  <ellipse cx="75" cy="160" rx="14" ry="14" fill="#e0b7a0" opacity=".5"/>
  <ellipse cx="135" cy="162" rx="13" ry="14" fill="#dfb69f" opacity=".5"/>
  <path d="M60 84L100 93 140 105 166 118 166 106 120 90 70 78z" fill="#8a5e4b" opacity=".45"/>
 </g></g>
 <g filter="url(#b2)">
  <!-- shirt folds -->
  <path d="M20 245L48 232 60 258H10z" fill="#573b31" opacity=".6"/>
  <path d="M160 226L186 240 190 258H150z" fill="#573b31" opacity=".55"/>
  <path d="M56 206L59 224 66 240 76 252 83 259 72 259 58 238z" fill="#4f352c" opacity=".5"/>
  <path d="M152 205L147 224 139 240 130 252 124 259 136 259 152 236z" fill="#4f352c" opacity=".5"/>
  <path d="M36 124C31 124 28.500 128 29.500 134 30.500 142 34 151 39.500 158" fill="none" stroke="#c08e78" stroke-width="2.200" opacity=".6"/>
  <path d="M176 129C181 128.500 184 132 183.500 138 182.500 147 178.500 156 172.500 164" fill="none" stroke="#c9a08e" stroke-width="2.200" opacity=".55"/>
  <!-- eyebrows -->
  <path d="M56.500 111.500C65 106 79 105 90.500 108.500" fill="none" stroke="#916a56" stroke-width="3.600" stroke-linecap="round" opacity=".8"/>
  <path d="M119.500 109.500C130 106.500 143 108 152.500 113.500" fill="none" stroke="#8a6552" stroke-width="3.400" stroke-linecap="round" opacity=".75"/>
  <!-- eye sockets -->
  <ellipse cx="77" cy="127.500" rx="14" ry="6.500" fill="#bf9382" opacity=".75"/>
  <ellipse cx="133" cy="128.500" rx="14" ry="6.500" fill="#bf9382" opacity=".75"/>
  <ellipse cx="77" cy="135" rx="11" ry="3" fill="#d3a595" opacity=".6"/>
  <ellipse cx="134" cy="136" rx="11" ry="3" fill="#d3a595" opacity=".6"/>
  <!-- nose shadows -->
  <path d="M93 128C92 142 90.500 150 88.500 158" fill="none" stroke="#c9997f" stroke-width="2.500" opacity=".4"/>
  <path d="M116.500 130C118 143 119.500 151 121.500 159" fill="none" stroke="#c9997f" stroke-width="2.500" opacity=".4"/>
  <ellipse cx="90.500" cy="160.500" rx="3.500" ry="4" fill="#c8937a" opacity=".6"/>
  <ellipse cx="119.500" cy="160.500" rx="3.500" ry="4" fill="#c8937a" opacity=".6"/>
  <ellipse cx="104.500" cy="156" rx="8" ry="6" fill="#e6bfa8" opacity=".6"/>
  <ellipse cx="104.500" cy="166" rx="15" ry="2.800" fill="#aa7862" opacity=".75"/>
  <ellipse cx="104.500" cy="174" rx="5" ry="5" fill="#cf9f88" opacity=".5"/>
  <!-- lips -->
  <path d="M82 184.500C92 181 99 181.500 104.500 183 110 181.500 118 182 128 185.500 121 193 112 195.500 104.500 195.500 96 195.500 88 192 82 184.500z" fill="#cc8783" opacity=".95"/>
  <ellipse cx="105" cy="201" rx="13" ry="2.500" fill="#c59b86" opacity=".6"/>
 </g>
 <g filter="url(#b1)">
  <!-- eyes -->
  <path d="M66 127.500C71 122.500 83 122 89.500 128.500 83 131.500 72 131.500 66 127.500z" fill="#d2b9b0"/>
  <path d="M121.500 129C127 123 139 122.500 145.500 128.500 139 132.500 128 132.500 121.500 129z" fill="#d2b9b0"/>
  <circle cx="77.800" cy="126.300" r="4.300" fill="#2b1a15"/>
  <circle cx="132.600" cy="127" r="4.300" fill="#2b1a15"/>
  <path d="M65.500 127.500C71 121.800 83 121.300 90 128" fill="none" stroke="#5b3c32" stroke-width="1.300"/>
  <path d="M121 129C127 122.300 139 121.800 146 128.500" fill="none" stroke="#5b3c32" stroke-width="1.300"/>
  <circle cx="79" cy="125.300" r=".9" fill="#e8dcd6"/>
  <circle cx="133.800" cy="126" r=".9" fill="#e8dcd6"/>
  <!-- nostrils -->
  <ellipse cx="97" cy="164" rx="3.200" ry="1.500" fill="#8d5e4c" opacity=".85"/>
  <ellipse cx="112.500" cy="164" rx="3.200" ry="1.500" fill="#8d5e4c" opacity=".85"/>
  <!-- mouth line -->
  <path d="M80 183.800C90 187 98 186.300 104.500 187 111 186.300 120 187.500 129.500 185.300" fill="none" stroke="#a2645c" stroke-width="1.400" stroke-linecap="round"/>
  <g fill="#2a1d19" opacity=".55">
   <path d="M100 88L118 97 132 104 120 96z"/><path d="M125 96L146 108 160 116 148 106z"/><path d="M72 80L86 88 97 92 84 84z"/><path d="M140 103L158 114 166 120 160 111z"/>
  </g>
  <!-- hair -->
  <path d="M40.800 142L39 129.700 36 118.300 33.800 108.800 32.700 97.400 34.200 86 37 76 40.800 66.500 44.600 57 50.300 47.500 56 37 65 29.600 74 24.200 83.200 19.500 92.500 14.900 101.700 11.100 106 10 112.600 8.500 124 9.500 135.400 12.300 146.800 18 156.300 24.700 165.800 34.200 172.400 43.700 177.100 55 179.600 66.500 181 79.700 181 97.400 180 108.800 178 120 175 129.700 171.500 142 169.600 133.500 168.600 124 165.400 115 157.700 110.600 148.500 106.600 136.200 101.400 120.800 95.400 105.400 90.500 93 87.300 78.200 82.300 66 79.500 54 83 48.500 91 45.200 101.200 42.700 112.600 41.400 124z" fill="#1b1614"/>
 </g>
 <!-- hair highlights -->
 <g filter="url(#b2)" opacity=".38">
  <path d="M100 40C125 38 150 55 165 80" fill="none" stroke="#3b3431" stroke-width="5"/>
  <path d="M90 60C115 58 140 75 160 100" fill="none" stroke="#342e2b" stroke-width="4"/>
 </g>
 </g>
</svg>

<div class="a" style="left:0;top:0;width:650px;height:1px;background:#3f3f3f"></div>
<div class="a" style="left:0;top:0;width:1px;height:453px;background:#3f3f3f"></div>
<div class="a" style="left:648.5px;top:0;width:1.5px;height:453px;background:#3b3b3b"></div>
<div class="a" style="left:0;top:452px;width:650px;height:1px;background:#474747"></div>
</div>
<!-- watermark -->
<div class="a" style="left:462px;top:349px;width:163.5px;height:79px;background:#fff"></div>
<div class="t" style="left:481.6px;top:366px;height:30px;line-height:30px;font-size:28px;letter-spacing:3px;font-weight:700;color:#17c835;font-family:'Noto Sans CJK SC',sans-serif">百科全说</div>
<div class="t" style="left:490.3px;top:400px;height:20px;line-height:20px;font-size:16.6px;letter-spacing:.95px;font-weight:300;color:#7f7f7f;font-family:'Noto Sans CJK SC',sans-serif">助你轻松解决</div>
</body>
</html>
